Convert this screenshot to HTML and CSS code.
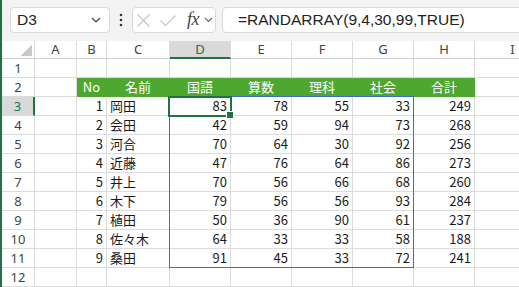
FILE: index.html
```html
<!DOCTYPE html>
<html lang="ja">
<head>
    <meta charset="UTF-8">
    <meta name="viewport" content="width=device-width, initial-scale=1.0">
    <title>Book1 - Excel</title>
    <link rel="stylesheet" href="styles.css">
</head>
<body>
    <div class="app">
        <!-- Formula bar -->
        <div class="formula-bar">
            <div class="name-box">
                <span>D3</span>
                <svg class="chev" width="10" height="6" viewBox="0 0 10 6"><path d="M1 1 L5 5 L9 1" fill="none" stroke="#444" stroke-width="1.2"/></svg>
            </div>
            <div class="dots">
                <svg width="4" height="14" viewBox="0 0 4 14"><circle cx="2" cy="2" r="1.3" fill="#333"/><circle cx="2" cy="7" r="1.3" fill="#333"/><circle cx="2" cy="12" r="1.3" fill="#333"/></svg>
            </div>
            <div class="fx-box">
                <svg class="cancel" width="13" height="13" viewBox="0 0 13 13"><path d="M0.5 0.5 L12.5 12.5 M12.5 0.5 L0.5 12.5" stroke="#c4c4c4" stroke-width="1.1"/></svg>
                <svg class="enter" width="16" height="11" viewBox="0 0 16 11"><path d="M0.5 5.5 L5.5 10.5 L15.5 0.5" fill="none" stroke="#c4c4c4" stroke-width="1.1"/></svg>
                <span class="fx">fx</span>
                <svg class="chev small" width="9" height="6" viewBox="0 0 9 6"><path d="M1 1 L4.5 4.5 L8 1" fill="none" stroke="#666" stroke-width="1.1"/></svg>
            </div>
            <div class="formula-input">=RANDARRAY(9,4,30,99,TRUE)</div>
        </div>

        <!-- Sheet grid -->
        <div class="sheet">
            <div class="ch corner"></div>
            <div class="ch">A</div><div class="ch">B</div><div class="ch">C</div><div class="ch sel">D</div>
            <div class="ch">E</div><div class="ch">F</div><div class="ch">G</div><div class="ch">H</div><div class="ch">I</div>

            <div class="rh">1</div>
            <div class="c"></div><div class="c"></div><div class="c"></div><div class="c"></div><div class="c"></div><div class="c"></div><div class="c"></div><div class="c"></div><div class="c"></div>

            <div class="rh">2</div>
            <div class="c"></div>
            <div class="c hd">No</div><div class="c hd">名前</div><div class="c hd">国語</div><div class="c hd">算数</div><div class="c hd">理科</div><div class="c hd">社会</div><div class="c hd">合計</div>
            <div class="c"></div>

            <div class="rh sel">3</div>
            <div class="c"></div><div class="c n">1</div><div class="c">岡田</div><div class="c n">83</div><div class="c n">78</div><div class="c n">55</div><div class="c n">33</div><div class="c n">249</div><div class="c"></div>

            <div class="rh">4</div>
            <div class="c"></div><div class="c n">2</div><div class="c">会田</div><div class="c n">42</div><div class="c n">59</div><div class="c n">94</div><div class="c n">73</div><div class="c n">268</div><div class="c"></div>

            <div class="rh">5</div>
            <div class="c"></div><div class="c n">3</div><div class="c">河合</div><div class="c n">70</div><div class="c n">64</div><div class="c n">30</div><div class="c n">92</div><div class="c n">256</div><div class="c"></div>

            <div class="rh">6</div>
            <div class="c"></div><div class="c n">4</div><div class="c">近藤</div><div class="c n">47</div><div class="c n">76</div><div class="c n">64</div><div class="c n">86</div><div class="c n">273</div><div class="c"></div>

            <div class="rh">7</div>
            <div class="c"></div><div class="c n">5</div><div class="c">井上</div><div class="c n">70</div><div class="c n">56</div><div class="c n">66</div><div class="c n">68</div><div class="c n">260</div><div class="c"></div>

            <div class="rh">8</div>
            <div class="c"></div><div class="c n">6</div><div class="c">木下</div><div class="c n">79</div><div class="c n">56</div><div class="c n">56</div><div class="c n">93</div><div class="c n">284</div><div class="c"></div>

            <div class="rh">9</div>
            <div class="c"></div><div class="c n">7</div><div class="c">植田</div><div class="c n">50</div><div class="c n">36</div><div class="c n">90</div><div class="c n">61</div><div class="c n">237</div><div class="c"></div>

            <div class="rh">10</div>
            <div class="c"></div><div class="c n">8</div><div class="c">佐々木</div><div class="c n">64</div><div class="c n">33</div><div class="c n">33</div><div class="c n">58</div><div class="c n">188</div><div class="c"></div>

            <div class="rh">11</div>
            <div class="c"></div><div class="c n">9</div><div class="c">桑田</div><div class="c n">91</div><div class="c n">45</div><div class="c n">33</div><div class="c n">72</div><div class="c n">241</div><div class="c"></div>

            <div class="rh">12</div>
            <div class="c"></div><div class="c"></div><div class="c"></div><div class="c"></div><div class="c"></div><div class="c"></div><div class="c"></div><div class="c"></div><div class="c"></div>

            <!-- spill range D3:G11 and active cell D3 -->
            <div class="spill"></div>
            <div class="active"></div>
        </div>
    </div>
</body>
</html>
```

FILE: styles.css
```css
* {
    margin: 0;
    padding: 0;
    box-sizing: border-box;
}

body {
    font-family: "Noto Sans CJK JP", "Noto Sans", sans-serif;
    background: #fff;
    overflow: hidden;
}

.app {
    border-left: 2px solid #217346;
    height: 287px;
    overflow: hidden;
}

/* formula bar */

.formula-bar {
    height: 41px;
    background: #f3f3f3;
    display: flex;
    align-items: flex-start;
    padding-top: 7px;
    font-family: "Liberation Sans", Arial, sans-serif;
    color: #222;
}

.name-box,
.fx-box,
.formula-input {
    height: 26px;
    background: #fff;
    border: 1px solid #d9d9d9;
    border-radius: 4px;
    display: flex;
    align-items: center;
}

.name-box {
    margin-left: 8px;
    width: 100px;
    padding: 0 8px 0 6px;
    font-size: 15.5px;
    justify-content: space-between;
}

.dots {
    width: 22px;
    height: 26px;
    display: flex;
    align-items: center;
    justify-content: center;
}

.fx-box {
    width: 84px;
    padding-left: 4px;
}

.fx-box .enter {
    margin-left: 10px;
}

.fx {
    font-family: "Liberation Serif", "DejaVu Serif", serif;
    font-style: italic;
    font-size: 18px;
    line-height: 18px;
    color: #444;
    margin-left: 11px;
    margin-top: -3px;
    letter-spacing: -0.5px;
}

.fx-box .small {
    margin-left: 5px;
}

.formula-input {
    margin-left: 6px;
    flex: 1;
    margin-right: -20px;
    padding-left: 15px;
    font-size: 15.5px;
}

/* sheet */

.sheet {
    position: relative;
    display: grid;
    grid-template-columns: 33px 42px 30px 63px 61px 61px 61px 61px 61px 76px;
    grid-template-rows: 18px repeat(12, 19px);
    font-size: 13px;
    line-height: 18px;
    color: #1a1a1a;
}

.ch,
.rh,
.c {
    border-right: 1px solid #dcdcdc;
    border-bottom: 1px solid #dcdcdc;
    white-space: nowrap;
    overflow: hidden;
}

.ch {
    text-align: center;
    color: #444;
    font-family: "Noto Sans", sans-serif;
    line-height: 17px;
    border-bottom-color: #cfcfcf;
}

.corner {
    background: linear-gradient(to bottom right, transparent 50%, #c8c8c8 50%) no-repeat;
    background-size: 11px 11px;
    background-position: right 2px bottom 2px;
}

.rh {
    text-align: center;
    color: #444;
    font-family: "Noto Sans", sans-serif;
}

.ch.sel {
    background: #d9d9d9;
    border-bottom: 2px solid #217346;
    color: #217346;
}

.rh.sel {
    background: #d9d9d9;
    border-right: 2px solid #217346;
    color: #217346;
}

.c {
    padding: 0 3px;
}

.c.n {
    text-align: right;
}

.c.hd {
    background: #4ea72e;
    border-color: #4ea72e;
    color: #fff;
    text-align: center;
}

.spill {
    position: absolute;
    grid-column: 5 / 9;
    grid-row: 4 / 13;
    top: -1px;
    left: -1px;
    right: 0;
    bottom: 0;
    border: 1px solid #3a6fc6;
    pointer-events: none;
}

.active {
    position: absolute;
    grid-column: 5 / 6;
    grid-row: 4 / 5;
    top: -1px;
    left: -2px;
    right: -1px;
    bottom: -1px;
    border: 2px solid #217346;
    pointer-events: none;
}

.active::after {
    content: "";
    position: absolute;
    right: -4px;
    bottom: -4px;
    width: 6px;
    height: 6px;
    background: #217346;
    border: 1px solid #fff;
}
```
